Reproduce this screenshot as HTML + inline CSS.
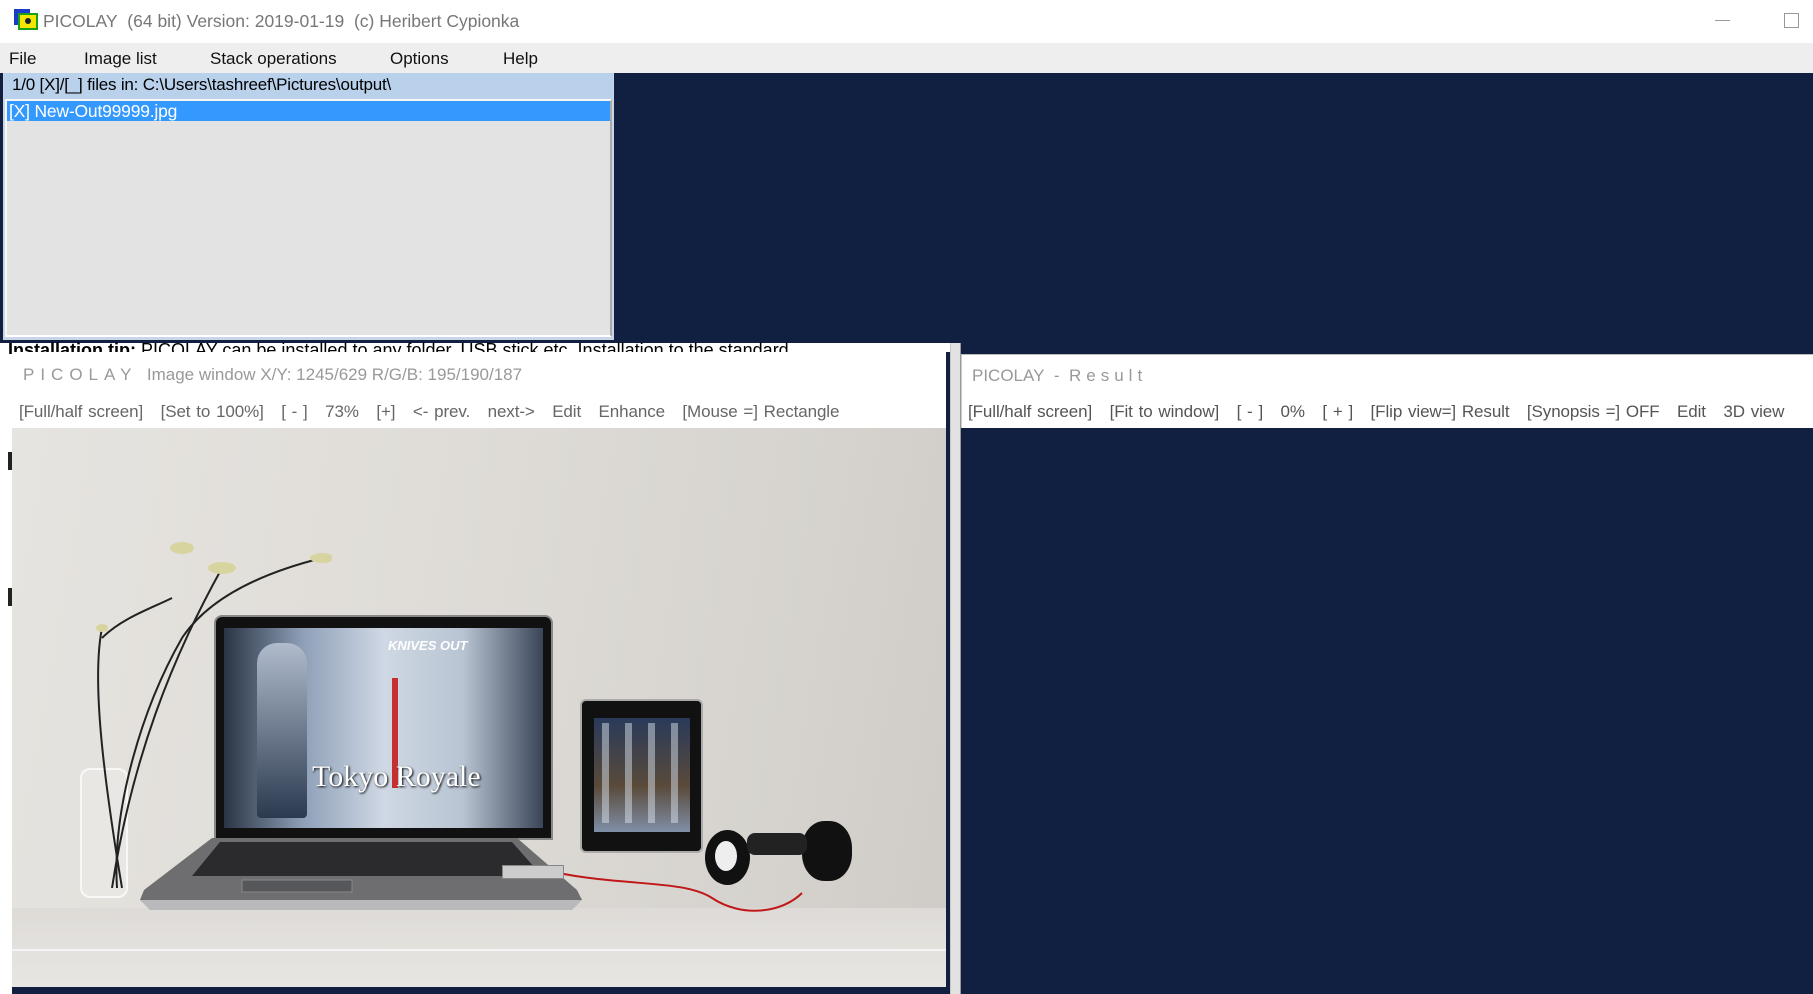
<!DOCTYPE html>
<html><head><meta charset="utf-8"><style>
*{margin:0;padding:0;box-sizing:border-box}
body{width:1813px;height:994px;overflow:hidden;background:#fff;font-family:"Liberation Sans",sans-serif;position:relative}
.a{position:absolute;white-space:nowrap}
</style></head><body>
<div class="a" style="left:0;top:0;width:1813px;height:43px;background:#fff"></div>
<div class="a" style="left:14px;top:9px;width:16px;height:16px;background:#1a3cc8"></div>
<div class="a" style="left:18px;top:13px;width:20px;height:17px;background:#f4e600;border:2px solid #18a018"></div>
<div class="a" style="left:25px;top:18px;width:6px;height:6px;border-radius:50%;background:#123"></div>
<div class="a" style="left:43px;top:11px;font-size:17.5px;color:#777">PICOLAY&nbsp; (64 bit) Version: 2019-01-19&nbsp; (c) Heribert Cypionka</div>
<div class="a" style="left:1715px;top:20px;width:15px;height:1px;background:#999"></div>
<div class="a" style="left:1784px;top:13px;width:15px;height:15px;border:1px solid #999"></div>
<div class="a" style="left:0;top:43px;width:1813px;height:30px;background:#eeeeee"></div>
<div class="a" style="left:9px;top:49px;font-size:17px;color:#111">File</div>
<div class="a" style="left:84px;top:49px;font-size:17px;color:#111">Image list</div>
<div class="a" style="left:210px;top:49px;font-size:17px;color:#111">Stack operations</div>
<div class="a" style="left:390px;top:49px;font-size:17px;color:#111">Options</div>
<div class="a" style="left:503px;top:49px;font-size:17px;color:#111">Help</div>
<div class="a" style="left:0;top:73px;width:1813px;height:272px;background:#111f40"></div>
<div class="a" style="left:3px;top:73px;width:611px;height:267px;background:#c8d6e8"></div>
<div class="a" style="left:4px;top:73px;width:609px;height:26px;background:#b9d1ea"></div>
<div class="a" style="left:12px;top:75px;font-size:17px;color:#000;letter-spacing:-0.2px">1/0 [X]/[_] files in: C:\Users\tashreef\Pictures\output\</div>
<div class="a" style="left:5px;top:99px;width:607px;height:238px;background:#e3e3e3;border:2px solid #f8f8f8;border-right-color:#aaa;border-bottom-color:#fff"></div>
<div class="a" style="left:7px;top:101px;width:603px;height:20px;background:#3399ff"></div>
<div class="a" style="left:9px;top:101px;font-size:17.5px;color:#fff;letter-spacing:-0.2px">[X] New-Out99999.jpg</div>
<div class="a" style="left:0;top:343px;width:950px;height:651px;background:#fff"></div>
<div class="a" style="left:8px;top:340px;font-size:18px;color:#000;overflow:hidden;height:14px;width:940px"><b>Installation tip:</b> PICOLAY can be installed to any folder, USB stick etc. Installation to the standard</div>
<div class="a" style="left:8px;top:452px;width:4px;height:18px;background:#222"></div>
<div class="a" style="left:8px;top:588px;width:4px;height:18px;background:#222"></div>
<div class="a" style="left:12px;top:352px;width:936px;height:76px;background:#fff"></div>
<div class="a" style="left:23px;top:365px;font-size:17px;color:#999"><span style="letter-spacing:6px">PICOLAY</span>&nbsp; Image window X/Y: 1245/629 R/G/B: 195/190/187</div>
<div class="a" style="left:19px;top:402px;font-size:17px;color:#666;letter-spacing:-0.1px;word-spacing:1.2px">[Full/half screen]&nbsp;&nbsp; [Set to 100%]&nbsp;&nbsp; [ - ]&nbsp;&nbsp; 73%&nbsp;&nbsp; [+]&nbsp;&nbsp; &lt;- prev.&nbsp;&nbsp; next-&gt;&nbsp;&nbsp; Edit&nbsp;&nbsp; Enhance&nbsp;&nbsp; [Mouse =] Rectangle</div>
<div class="a" style="left:946px;top:352px;width:4px;height:642px;background:#111f40"></div>
<div class="a" style="left:12px;top:987px;width:938px;height:7px;background:#111f40"></div>
<div class="a" style="left:12px;top:428px;width:934px;height:559px;background:linear-gradient(100deg,#e6e4e0 0%,#e0ddd8 40%,#d6d3ce 80%,#cfcbc6 100%);overflow:hidden">
 <div class="a" style="left:0;top:480px;width:934px;height:79px;background:linear-gradient(#dedbd7,#e8e6e3)"></div>
 <div class="a" style="left:0;top:521px;width:934px;height:2px;background:#f4f4f4"></div>
 <div class="a" style="left:68px;top:340px;width:48px;height:130px;border:2px solid rgba(255,255,255,.7);border-radius:10px;background:rgba(240,240,240,.4)"></div>
 <svg class="a" style="left:60px;top:80px" width="260" height="400"><g stroke="#222" stroke-width="2" fill="none"><path d="M40 380 C60 250 100 150 150 60"/><path d="M45 380 C40 300 70 200 110 130 C130 100 170 70 250 50"/><path d="M50 380 C30 260 20 170 30 120"/><path d="M30 130 C50 110 80 100 100 90"/></g><g fill="#d8d4a0"><ellipse cx="150" cy="60" rx="14" ry="6"/><ellipse cx="110" cy="40" rx="12" ry="6"/><ellipse cx="250" cy="50" rx="12" ry="5"/><ellipse cx="30" cy="120" rx="6" ry="4"/></g></svg>
 <div class="a" style="left:202px;top:187px;width:339px;height:225px;background:#111;border-radius:8px 8px 0 0;border:2px solid #888"></div>
 <div class="a" style="left:212px;top:200px;width:319px;height:200px;background:linear-gradient(90deg,#2a3445 0%,#8fa0b8 25%,#cfd8e4 50%,#b8c4d2 75%,#3a4658 100%)"></div>
 <div class="a" style="left:245px;top:215px;width:50px;height:175px;background:linear-gradient(#b0bccc,#2c3a50);border-radius:20px 20px 4px 4px"></div>
 <div class="a" style="left:380px;top:250px;width:6px;height:110px;background:#c43030"></div>
 <div class="a" style="left:376px;top:210px;font-size:13px;font-weight:bold;font-style:italic;color:#fff">KNIVES OUT</div>
 <div class="a" style="left:300px;top:332px;font-size:30px;font-family:'Liberation Serif',serif;color:#fff;text-shadow:1px 1px 2px #000">Tokyo Royale</div>
 <svg class="a" style="left:120px;top:410px" width="460" height="80"><polygon points="80,0 385,0 445,52 450,62 8,62 12,52" fill="#6e6e70"/><polygon points="88,4 380,4 410,38 60,38" fill="#2b2b2d"/><rect x="110" y="42" width="110" height="12" fill="#55575a" stroke="#888"/><polygon points="8,62 450,62 440,72 18,72" fill="#b9b9bb"/></svg>
 <div class="a" style="left:568px;top:271px;width:123px;height:154px;background:#111;border-radius:6px;border:2px solid #aaa"></div>
 <div class="a" style="left:582px;top:290px;width:96px;height:114px;background:linear-gradient(#2a3a5a,#5a4a3a 60%,#7f8fa8)"></div>
 <div class="a" style="left:584px;top:295px;width:92px;height:100px;background:repeating-linear-gradient(90deg,transparent 0 6px,rgba(220,230,240,.6) 6px 13px,transparent 13px 23px);opacity:.8"></div>
 <div class="a" style="left:693px;top:402px;width:45px;height:55px;background:#111;border-radius:50%"></div>
 <div class="a" style="left:703px;top:413px;width:22px;height:30px;background:#eee;border-radius:50%"></div>
 <div class="a" style="left:790px;top:393px;width:50px;height:60px;background:#111;border-radius:45%"></div>
 <div class="a" style="left:735px;top:405px;width:60px;height:22px;background:#222;border-radius:8px"></div>
 <svg class="a" style="left:520px;top:430px" width="280" height="70"><path d="M5 10 C80 30 150 20 180 40 C210 60 250 55 270 35" stroke="#c01818" stroke-width="2" fill="none"/></svg>
 <div class="a" style="left:490px;top:437px;width:62px;height:14px;background:#ccc;border:1px solid #888"></div>
</div>
<div class="a" style="left:950px;top:343px;width:11px;height:651px;background:#e2e2e2;border-left:1px solid #c8c8c8;border-right:1px solid #999"></div>
<div class="a" style="left:961px;top:343px;width:852px;height:651px;background:#111f40"></div>
<div class="a" style="left:961px;top:354px;width:852px;height:74px;background:#fff;border-top:1px solid #bbb;border-left:1px solid #ccc"></div>
<div class="a" style="left:972px;top:366px;font-size:17px;color:#999">PICOLAY&nbsp; - &nbsp;<span style="letter-spacing:5px">Result</span></div>
<div class="a" style="left:968px;top:402px;font-size:17px;color:#555;letter-spacing:-0.1px;word-spacing:1.2px">[Full/half screen]&nbsp;&nbsp; [Fit to window]&nbsp;&nbsp; [ - ]&nbsp;&nbsp; 0%&nbsp;&nbsp; [ + ]&nbsp;&nbsp; [Flip view=] Result&nbsp;&nbsp; [Synopsis =] OFF&nbsp;&nbsp; Edit&nbsp;&nbsp; 3D view</div>
</body></html>
